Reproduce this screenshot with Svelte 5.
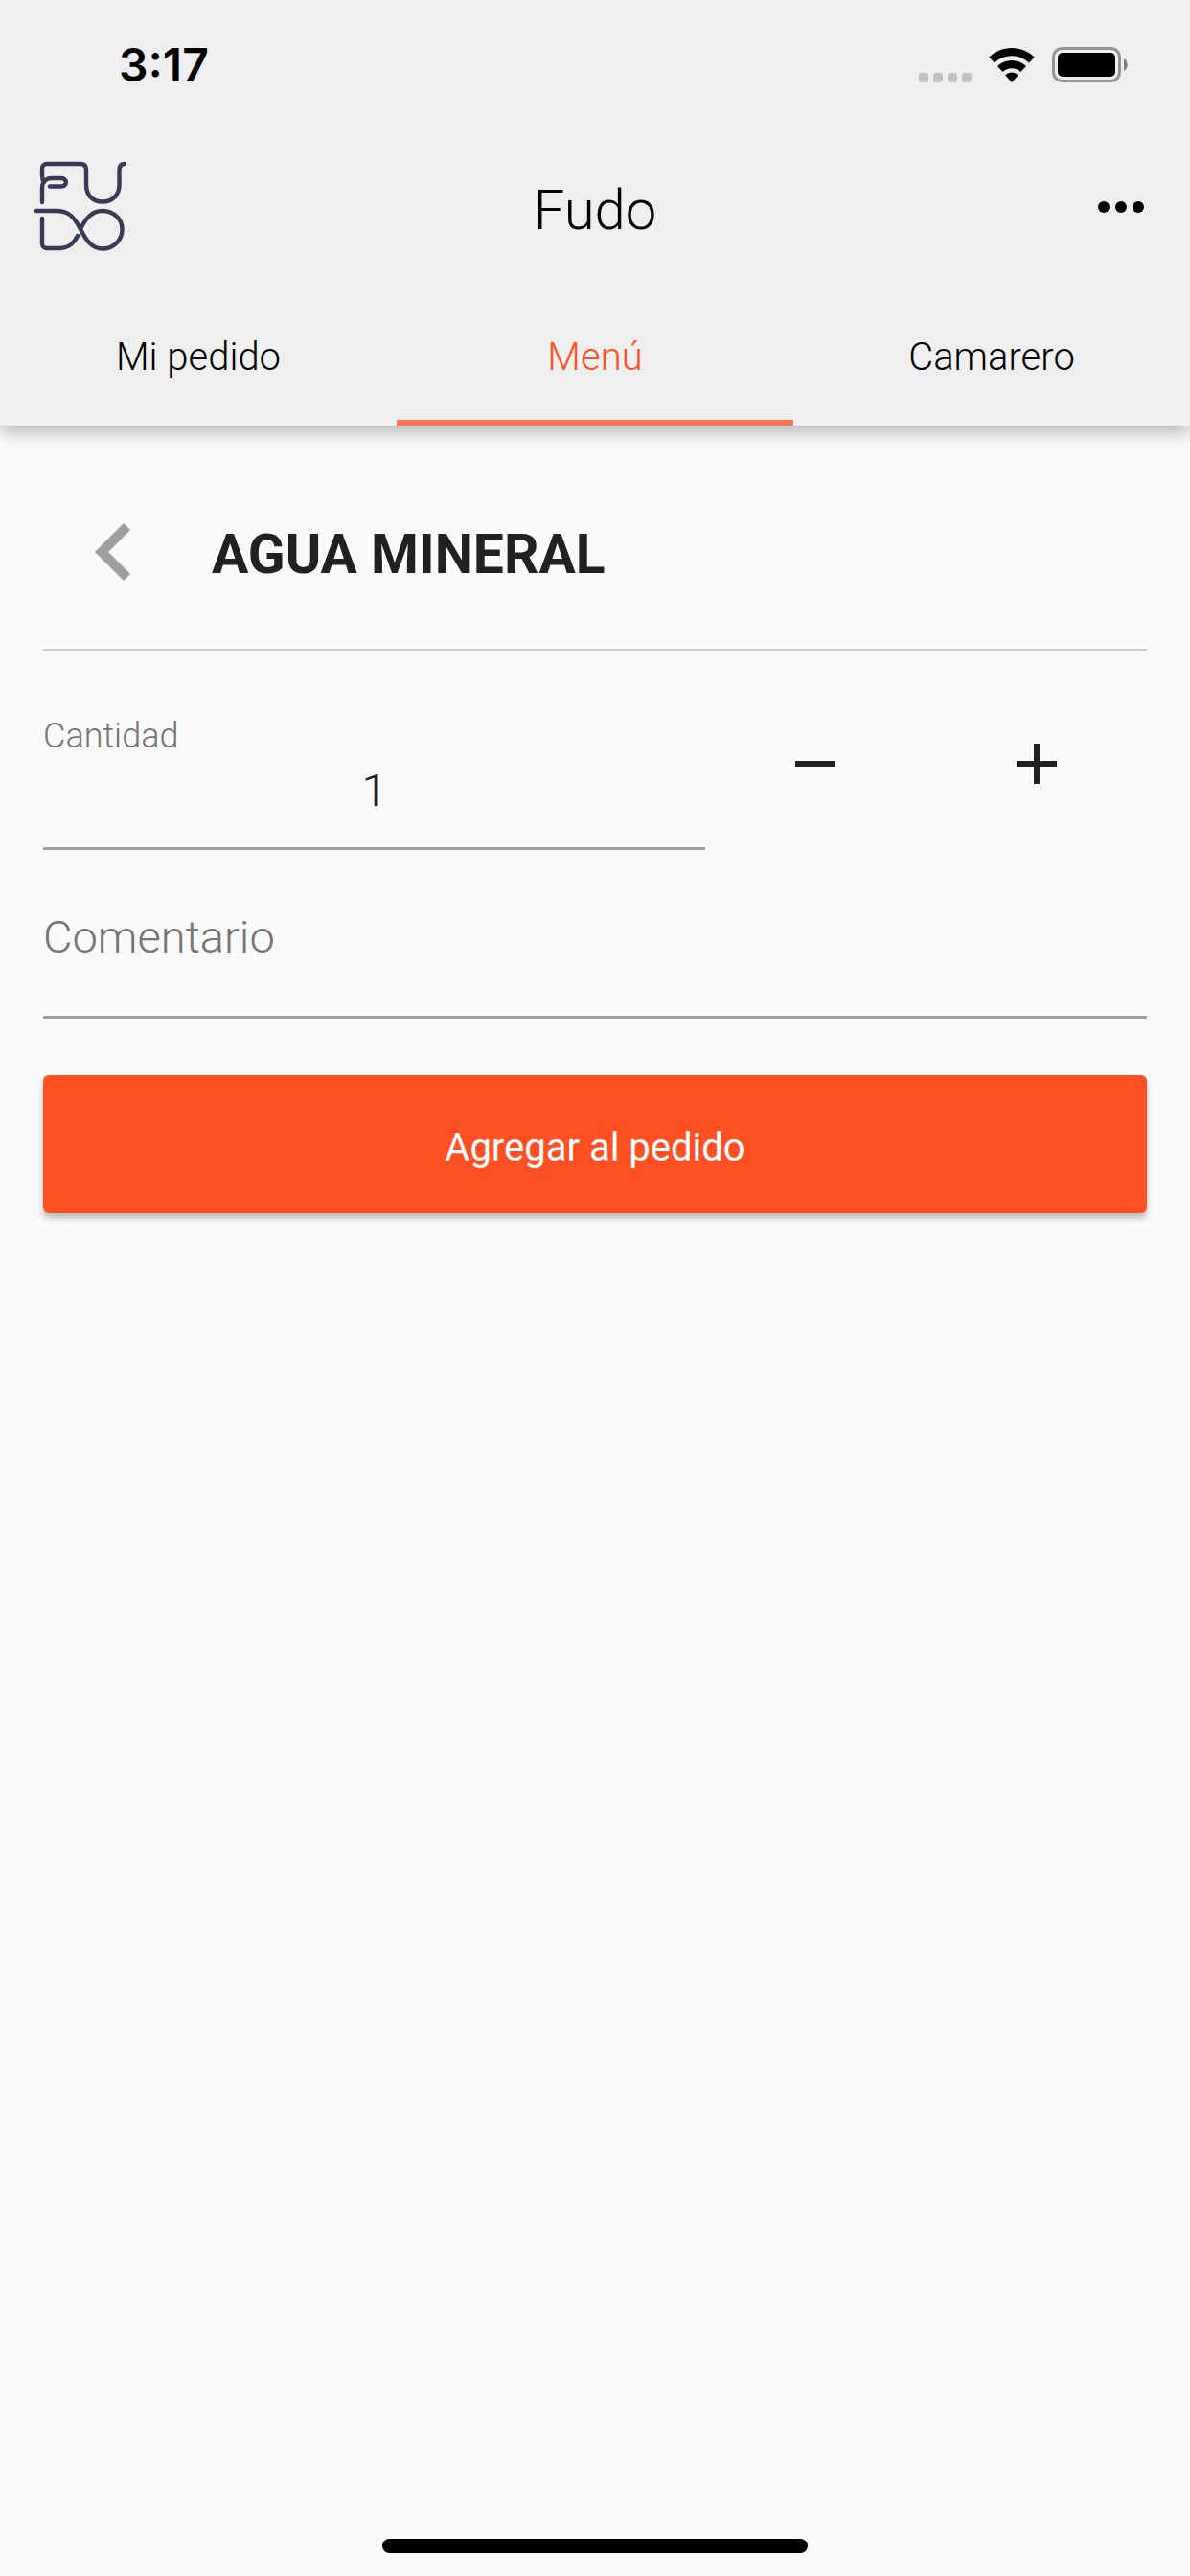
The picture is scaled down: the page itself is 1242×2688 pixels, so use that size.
<script lang="ts">
	let activeTab = 'menu';
	let quantity = 1;
	let comment = '';

	const tabs = [
		{ id: 'pedido', label: 'Mi pedido' },
		{ id: 'menu', label: 'Menú' },
		{ id: 'camarero', label: 'Camarero' },
	];

	function decrease() {
		if (quantity > 1) quantity -= 1;
	}

	function increase() {
		quantity += 1;
	}
</script>

<div class="screen">
	<header>
		<div class="status-bar">
			<span class="time">3:17</span>
			<div class="status-icons">
				<svg class="signal" viewBox="0 0 55 10" aria-hidden="true">
					<rect x="0" width="10" height="10" rx="3" />
					<rect x="15" width="10" height="10" rx="3" />
					<rect x="30" width="10" height="10" rx="3" />
					<rect x="45" width="10" height="10" rx="3" />
				</svg>
				<svg class="wifi" viewBox="0 0 48 36" aria-hidden="true">
					<path d="M24 0C33 0 41.500 3.600 47.700 9.600L42 15.600C37.300 11 31 8.200 24 8.200S10.700 11 6 15.600L0.300 9.600C6.500 3.600 15 0 24 0Z" />
					<path d="M24 13C29.700 13 35 15.300 39 19L33.300 24.900C30.800 22.500 27.600 21.200 24 21.200S17.200 22.500 14.700 24.900L9 19C13 15.300 18.300 13 24 13Z" />
					<path d="M24 25.500C26.500 25.500 28.900 26.500 30.700 28.600L24 36L17.300 28.600C19.100 26.500 21.500 25.500 24 25.500Z" />
				</svg>
				<svg class="battery" viewBox="0 0 79 37" aria-hidden="true">
					<rect x="1.500" y="1.500" width="69" height="34" rx="9" fill="none" stroke="#939393" stroke-width="3" />
					<rect x="6" y="6" width="60" height="25" rx="5" />
					<path d="M75 12C80 15 80 22 75 25Z" fill="#808080" />
				</svg>
			</div>
		</div>

		<div class="toolbar">
			<svg class="logo" viewBox="0 1 130 130" role="img" aria-label="Fudo">
				<path d="M24 61V46C24 40 28 36 34 36H44C50.500 36 50.500 44.500 44 44.500H32" />
				<path d="M26 40C24.500 38 24 36 24 33V26C24 23 26 21 29 21H64C68 21 70 23 70 27V43C70 54 77 60.500 87 60.500S104.500 54 104.500 43V28C104.500 23.500 106 21 110 21" />
				<path d="M18 70H38C52 70 57 76 64 89C70 101 76 109.500 87 109.500C98 109.500 107.500 101 107.500 89.500S98 70 87 70C75 70 69 79 64 89" />
				<path d="M61 96C57 104 52 109 42 109H29C26 109 24 107 24 104V78" />
			</svg>
			<h1>Fudo</h1>
			<button class="more" aria-label="Más opciones">
				<svg viewBox="0 0 48 12" aria-hidden="true">
					<circle cx="6" cy="6" r="6" />
					<circle cx="24" cy="6" r="6" />
					<circle cx="42" cy="6" r="6" />
				</svg>
			</button>
		</div>

		<nav>
			{#each tabs as tab}
				<button
					class="tab"
					class:active={activeTab === tab.id}
					on:click={() => (activeTab = tab.id)}
				>{tab.label}</button>
			{/each}
		</nav>
	</header>

	<main>
		<div class="product">
			<button class="back" aria-label="Volver">
				<svg viewBox="0 0 24 24" aria-hidden="true">
					<path d="M15.410 7.410L14 6l-6 6 6 6 1.410-1.410L10.830 12z" />
				</svg>
			</button>
			<h2>AGUA MINERAL</h2>
		</div>

		<div class="quantity">
			<div class="field amount">
				<label for="quantity">Cantidad</label>
				<input id="quantity" type="text" inputmode="numeric" bind:value={quantity} />
			</div>
			<button class="step" aria-label="Restar" on:click={decrease}>
				<svg viewBox="0 0 24 24" aria-hidden="true"><path d="M19 13H5v-2h14v2z" /></svg>
			</button>
			<button class="step" aria-label="Sumar" on:click={increase}>
				<svg viewBox="0 0 24 24" aria-hidden="true"><path d="M19 13h-6v6h-2v-6H5v-2h6V5h2v6h6v2z" /></svg>
			</button>
		</div>

		<div class="field comment">
			<input type="text" placeholder="Comentario" aria-label="Comentario" bind:value={comment} />
		</div>

		<button class="submit">Agregar al pedido</button>
	</main>

	<div class="home-indicator"></div>
</div>

<style>
	:global(body) {
		background: #fafafa;
	}

	.screen {
		display: flex;
		flex-direction: column;
		min-height: 100vh;
		font-family: Roboto, 'Liberation Sans', sans-serif;
		font-weight: 300;
		color: #212121;
	}

	button {
		display: flex;
		align-items: center;
		justify-content: center;
		padding: 0;
		border: none;
		background: none;
		font: inherit;
		color: inherit;
		cursor: pointer;
	}

	svg {
		display: block;
	}

	header {
		background: #efefef;
		color: #000;
		box-shadow: 0 6px 18px rgba(0, 0, 0, 0.3);
	}

	.status-bar {
		display: flex;
		align-items: center;
		justify-content: space-between;
		height: 132px;
		padding: 2px 65px 0 124px;
		box-sizing: border-box;
	}

	.time {
		font-family: Inter, sans-serif;
		font-size: 48px;
		font-weight: 600;
	}

	.status-icons {
		display: flex;
		align-items: flex-end;
		gap: 18px;
	}

	.signal {
		width: 55px;
		height: 10px;
		fill: #c2c2c2;
	}

	.wifi {
		width: 48px;
		height: 36px;
	}

	.battery {
		width: 79px;
		height: 37px;
	}

	.toolbar {
		display: grid;
		grid-template-columns: 1fr auto 1fr;
		align-items: center;
		height: 168px;
		padding: 0 20px;
	}

	.logo {
		width: 130px;
		height: 130px;
		fill: none;
		stroke: #383a56;
		stroke-width: 4.4;
		stroke-linecap: round;
		stroke-linejoin: round;
	}

	h1,
	h2 {
		margin: 0;
		padding-top: 6px;
		line-height: 72px;
	}

	h1 {
		font-size: 58px;
		font-weight: 300;
	}

	.more {
		justify-self: end;
		width: 104px;
		height: 104px;
	}

	.more svg {
		width: 48px;
		height: 12px;
	}

	nav {
		display: grid;
		grid-template-columns: repeat(3, 1fr);
	}

	.tab {
		height: 144px;
		border-top: 6px solid transparent;
		border-bottom: 6px solid transparent;
		font-size: 40px;
	}

	.tab.active {
		border-bottom-color: #ff7350;
		color: #ff5023;
	}

	main {
		padding: 0 45px;
	}

	.product {
		display: flex;
		align-items: center;
		gap: 28px;
		padding: 60px 0 29px;
		border-bottom: 2px solid #cbcbcb;
	}

	.back {
		width: 148px;
		height: 144px;
	}

	.back svg {
		width: 120px;
		height: 120px;
		fill: #9e9e9e;
	}

	h2 {
		font-size: 57px;
		font-weight: 700;
	}

	.quantity {
		display: grid;
		grid-template-columns: 3fr 1fr 1fr;
		align-items: start;
		padding-top: 46px;
	}

	.field {
		display: flex;
		flex-direction: column;
		border-bottom: 3px solid #9e9e9e;
	}

	.amount {
		padding: 23px 0 24px;
	}

	.comment {
		padding: 54px 0 47px;
	}

	label {
		font-size: 36px;
		line-height: 40px;
		color: #757575;
	}

	input {
		width: 100%;
		height: 72px;
		padding: 0;
		border: none;
		outline: none;
		background: none;
		font: inherit;
		font-size: 47px;
		color: #212121;
	}

	input::placeholder {
		color: #757575;
		opacity: 1;
	}

	.amount input {
		text-align: center;
	}

	.step {
		height: 144px;
	}

	.step svg {
		width: 72px;
		height: 72px;
		fill: #212121;
	}

	.submit {
		width: 100%;
		height: 144px;
		margin-top: 59px;
		padding-top: 6px;
		border-radius: 6px;
		background: #ff5023;
		box-shadow: 0 5px 6px rgba(0, 0, 0, 0.25);
		font-size: 40px;
		font-weight: 400;
		color: #fff;
	}

	.home-indicator {
		width: 444px;
		height: 15px;
		margin: auto auto 24px;
		border-radius: 8px;
		background: #000;
	}
</style>
